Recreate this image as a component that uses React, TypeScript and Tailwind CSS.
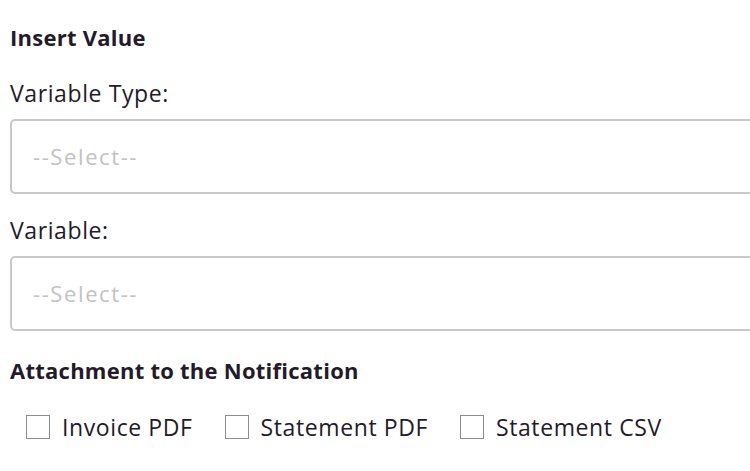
import { useState } from "react"

const attachments = ["Invoice PDF", "Statement PDF", "Statement CSV"]

function SelectBox() {
  return (
    <div className="mt-[12px] flex h-[75px] w-[780px] items-center rounded-[5px] border-2 border-[#c8c8c8] pl-[21px] text-[22px] tracking-[1.6px] text-[#c2c2c2]">
      --Select--
    </div>
  )
}

export default function App() {
  const [checked, setChecked] = useState<Record<string, boolean>>({})

  return (
    <div
      className="h-[471px] w-[750px] overflow-hidden bg-white pl-[10px] pt-[23px] text-[#241a2a]"
      style={{ fontFamily: "'Open Sans', Lato, sans-serif" }}
    >
      <h3 className="text-[22px] font-bold leading-[28px] tracking-[0.25px]">Insert Value</h3>

      <label className="mt-[28px] block text-[23px] leading-[28px] tracking-[0.6px]">Variable Type:</label>
      <SelectBox />

      <label className="mt-[22px] block text-[23px] leading-[28px] tracking-[0.6px]">Variable:</label>
      <SelectBox />

      <h3 className="mt-[25px] text-[22px] font-bold leading-[28px] tracking-[0.25px]">
        Attachment to the Notification
      </h3>

      <div className="mt-[29px] flex items-center pl-[16px]">
        {attachments.map((name) => (
          <label
            key={name}
            className="mr-[32px] flex cursor-pointer items-center gap-[12px] text-[23px] leading-[28px] tracking-[0.6px]"
          >
            <span
              onClick={() => setChecked({ ...checked, [name]: !checked[name] })}
              className="h-[24px] w-[24px] border border-[#8c8c8c] bg-white"
            />
            {name}
          </label>
        ))}
      </div>
    </div>
  )
}
